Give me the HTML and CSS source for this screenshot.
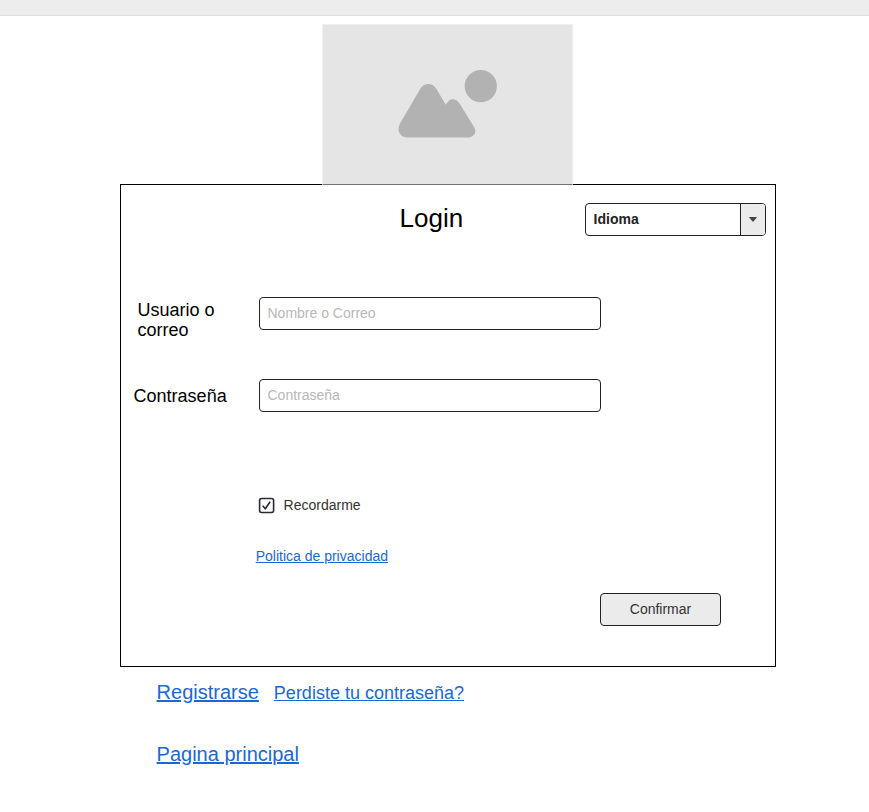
FILE: index.html
```html
<!DOCTYPE html>
<html lang="es">
<head>
<meta charset="utf-8">
<title>Login</title>
<link rel="stylesheet" href="styles.css">
</head>
<body>
<header class="topbar"></header>
<main class="page">
  <div class="hero">
    <svg width="250" height="161" viewBox="0 0 250 161" aria-hidden="true"><path d="M78 99.5L98 65.3C102 58.8 110.3 58.8 114.4 65.3L123.7 81.3C127 74.2 133.5 73.8 137.7 80L152.3 104C155.5 109 152 114.2 146 114.2H86C78 114.2 73.5 107.5 78 99.5Z"/><circle cx="159" cy="62.6" r="16.2"/></svg>
  </div>
  <form class="card">
    <div class="head">
      <h1>Login</h1>
      <div class="select"><span class="value">Idioma</span><span class="arrow"><svg width="8" height="5" viewBox="0 0 8 5"><path d="M.7 0H7.3Q8.3 0 7.6 .8L4.7 4.3Q4 5 3.3 4.3L.4 .8Q-.3 0 .7 0Z"/></svg></span></div>
    </div>
    <div class="row user"><label for="u">Usuario o<br>correo</label><input id="u" type="text" placeholder="Nombre o Correo"></div>
    <div class="row pass"><label for="p">Contraseña</label><input id="p" type="password" placeholder="Contraseña"></div>
    <div class="remember"><svg width="17" height="17" viewBox="0 0 17 17"><rect x="1.6" y="1.5" width="14" height="14" rx="2"/><path d="M4.7 8.8L7.3 11.8L12.1 4.8"/></svg><span>Recordarme</span></div>
    <a class="privacy" href="#">Politica de privacidad</a>
    <button class="confirm" type="button">Confirmar</button>
  </form>
  <nav class="links">
    <a class="big" href="#">Registrarse</a><a class="mid" href="#">Perdiste tu contraseña?</a>
  </nav>
  <nav class="links home"><a class="big" href="#">Pagina principal</a></nav>
</main>
</body>
</html>
```
FILE: styles.css
```css
* { box-sizing: border-box; }
body { margin: 0; background: #fff; color: #000; font-family: "Liberation Sans", Arial, sans-serif; }
.topbar { height: 16px; background: #ededed; border-bottom: 1px solid #dedede; }
.page { width: 656px; margin-left: 120px; padding-top: 8px; }
.hero { width: 251px; height: 161px; margin: 0 0 -1px 202px; background: #e5e5e5; border: 1px solid #efefef; border-width: 1px 1px 0; border-bottom: 1px solid #737373; position: relative; z-index: 1; }
.hero svg { display: block; margin: -1px 0 0 -1px; height: 160px; width: 250px; fill: #b2b2b2; }
.card { height: 483px; border: 1px solid #000; display: flex; flex-direction: column; align-items: flex-start; }
.head { display: flex; width: 100%; height: 112px; padding: 18px 9px 0 278.5px; justify-content: space-between; align-items: flex-start; }
h1 { margin: 0; font-size: 26px; line-height: 31px; font-weight: 400; }
.select { display: flex; width: 181px; height: 33px; border: 1px solid #222; border-radius: 4px; overflow: hidden; }
.value { flex: 1; padding-left: 7.6px; font-size: 14px; font-weight: 700; line-height: 31px; color: #222; }
.arrow { width: 25px; border-left: 1px solid #222; background: #ebebeb; display: flex; align-items: center; justify-content: center; }
.arrow svg { fill: #444; }
.row { display: flex; height: 82px; align-items: flex-start; }
.row label { width: 138px; font-size: 18px; line-height: 20px; }
.user label { padding: 3px 0 0 16.5px; }
.pass label { padding: 7px 0 0 12.6px; }
.row input { width: 342px; height: 33px; padding: 0 8px 1px 7.5px; border: 1px solid #222; border-radius: 4px; font: 14px "Liberation Sans", Arial, sans-serif; }
.row input::placeholder { color: #b8b8b8; opacity: 1; }
.remember { display: flex; align-items: center; gap: 8.6px; height: 20px; margin: 34px 0 0 137px; font-size: 14px; color: #333; }
.remember svg { fill: none; stroke: #2b2b30; stroke-width: 1.6; }
a { color: #1b68d3; text-decoration: underline; }
.privacy { margin: 33px 0 0 134.7px; font-size: 14px; line-height: 16px; }
.confirm { width: 121px; height: 33px; margin: 29px 0 0 479px; padding: 0 0 1px; border: 1px solid #222; border-radius: 4px; background: #ebebeb; color: #333; font: 14px "Liberation Sans", Arial, sans-serif; }
.links { display: flex; align-items: baseline; gap: 15px; height: 24px; margin: 13px 0 0 36.6px; }
.home { margin-top: 38px; }
.big { font-size: 20px; line-height: 24px; }
.mid { font-size: 18px; line-height: 24px; }
```
